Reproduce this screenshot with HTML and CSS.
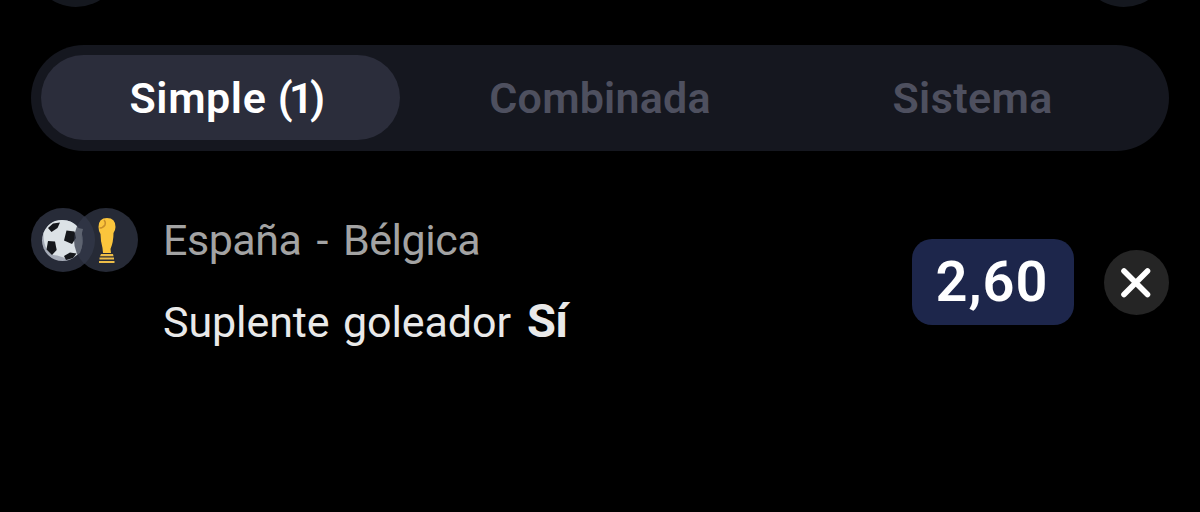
FILE: index.html
```
<!DOCTYPE html>
<html lang="es">
    <head>
        <meta charset="utf-8">
        <title>Cupón</title>
        <link rel="stylesheet" href="styles.css">
    </head>
    <body>
        <div class="top">
            <div class="round"></div>
            <div class="round"></div>
        </div>

        <div class="tabs">
            <div class="tab active"><span class="simple">Simple <span class="count">(1)</span></span></div>
            <div class="tab"><span class="combinada">Combinada</span></div>
            <div class="tab"><span class="sistema">Sistema</span></div>
        </div>

        <div class="bet">
            <div class="icons">
                <svg class="ball" viewBox="0 0 64 64">
                    <circle cx="32" cy="32" r="32" fill="#272b38"/>
                    <ellipse cx="31.5" cy="32.5" rx="20.5" ry="20.5" fill="#a5abb7"/>
                    <path d="M12.500 25Q18 12 31 12Q42 12 47 20L52 21Q50 27 51 32Q52 38 49 45L44 48Q38 52 31 49Q26 47 22 47L16 42Q12 34 12.500 25Z" fill="#dce2e6"/>
                    <path d="M17 20L22 15.5L29 14.5L26.5 20L20.5 24Z" fill="#15171b"/>
                    <path d="M35.5 22.5L43.5 23.5L45 30L41 36L33 32.5Z" fill="#15171b"/>
                    <path d="M17 33L24 33.5L25.7 42L21 47L15.5 41.5Z" fill="#15171b"/>
                    <path d="M33 48L39 44.5L45.5 45.5L42 50L35 52Z" fill="#15171b"/>
                </svg>
                <!-- see-through disc, the ball shows under its edge -->
                <svg class="cup" viewBox="0 0 64 64">
                    <circle cx="32" cy="32" r="32" fill="#333848" fill-opacity="0.75"/>
                    <path d="M24.500 19Q24.500 10 33 10Q41.500 10 41.500 19Q41.500 22 39.500 25Q39.500 34 36.500 41L37 45H29L28.500 40Q26.500 33 26.500 26Q24.500 23 24.500 19Z" fill="#fbc53c"/>
                    <path d="M25.500 20Q29 20 31 17Q32 14 30 12" fill="none" stroke="#c98f2a" stroke-width="1.5"/>
                    <path d="M27 46H39L39.500 48.200H26ZM25.500 49.500H40V51.500H25.500ZM25 53H40.500V55H25Z" fill="#edbd48"/>
                </svg>
            </div>
            <div class="info">
                <div class="match">España - Bélgica</div>
                <div class="pick"><span>Suplente goleador</span><b>Sí</b></div>
            </div>
            <div class="odds"><span>2,60</span></div>
            <div class="close">
                <svg viewBox="0 0 65 65">
                    <path d="M20 21L43.500 44.500M43.500 21L20 44.500" stroke="#fff" stroke-width="5.600" stroke-linecap="round"/>
                </svg>
            </div>
        </div>
    </body>
</html>
```
FILE: styles.css
```
body {
    margin: 0;
    height: 512px;
    padding: 0 31px;
    box-sizing: border-box;
    overflow: hidden;
    background-color: #000;
    font-family: Roboto, "Liberation Sans", sans-serif;
}

/* bottom edge of the header buttons */
.top {
    display: flex;
    justify-content: space-between;
    align-items: flex-end;
    height: 7px;
    overflow: hidden;
}
.round {
    flex: none;
    width: 90px;
    height: 90px;
    border-radius: 50%;
    background-color: #15181f;
}

.tabs {
    display: grid;
    grid-template-columns: 1fr 1fr 1fr;
    box-sizing: border-box;
    height: 106px;
    margin-top: 38px;
    padding: 10px 10px 11px;
    border-radius: 53px;
    background-color: #15171f;
}
.tab {
    display: flex;
    justify-content: center;
    align-items: center;
    color: #4e505f;
    font-size: 43px;
    font-weight: 600;
    line-height: 50px;
    white-space: nowrap;
}
.active {
    box-sizing: border-box;
    width: 359px;
    padding-left: 10px;
    border-radius: 43px;
    background-color: #2b2d3b;
    color: #fff;
}
.simple {
    letter-spacing: 0.6px;
}
.count {
    letter-spacing: -3.6px;
}
.combinada {
    letter-spacing: 0.2px;
}
.sistema {
    letter-spacing: 0.4px;
}

.bet {
    display: flex;
    align-items: flex-start;
    margin-top: 57px;
}
.icons {
    display: flex;
    width: 132px;
}
.icons svg {
    flex: none;
    width: 64px;
    height: 64px;
}
.cup {
    margin-left: -21px;
}
.info {
    flex: 1;
    padding-top: 7px;
    font-size: 43px;
    line-height: 50px;
    white-space: nowrap;
}
.match {
    color: #a3a3a3;
    font-weight: 400;
    letter-spacing: -0.5px;
    word-spacing: 5px;
}
.pick {
    display: flex;
    align-items: baseline;
    gap: 16px;
    margin-top: 31px;
    color: #e9e9e9;
    font-weight: 400;
    letter-spacing: -0.1px;
    word-spacing: 3px;
}
.pick b {
    font-size: 47px;
    font-weight: 700;
    letter-spacing: -0.5px;
}
.odds {
    display: flex;
    justify-content: center;
    align-items: center;
    width: 162px;
    height: 86px;
    margin-top: 31px;
    border-radius: 20px;
    background-color: #1d264b;
    color: #fff;
    font-size: 56px;
    font-weight: 600;
    letter-spacing: 1px;
}
.odds span {
    margin-right: 2px;
}
.close {
    width: 65px;
    height: 65px;
    margin: 42px 0 0 30px;
    border-radius: 50%;
    background-color: #252525;
}
.close svg {
    display: block;
}
```
